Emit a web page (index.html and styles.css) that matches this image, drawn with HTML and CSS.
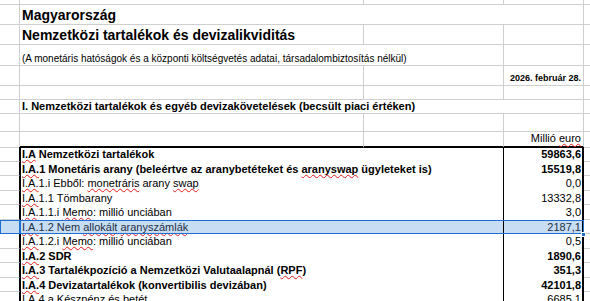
FILE: index.html
```html
<!DOCTYPE html>
<html>
<head>
  <meta charset="utf-8">
  <title>Nemzetközi tartalékok</title>
  <link rel="stylesheet" href="styles.css">
</head>
<body>
  <div class="sheet">
    <!-- fejléc -->
    <div class="row edge">
      <div class="cell"></div><div class="cell"></div><div class="cell"></div><div class="cell"></div><div class="cell e"></div>
    </div>
    <div class="row title">
      <div class="cell"></div>
      <div class="cell span3">Magyarország</div>
      <div class="cell e"></div>
    </div>
    <div class="row title">
      <div class="cell"></div>
      <div class="cell">Nemzetközi tartalékok és devizalikviditás</div>
      <div class="cell"></div><div class="cell"></div><div class="cell e"></div>
    </div>
    <div class="row subtitle">
      <div class="cell"></div>
      <div class="cell span2">(A monetáris hatóságok és a központi költségvetés adatai, társadalombiztosítás nélkül)</div>
      <div class="cell"></div><div class="cell e"></div>
    </div>
    <div class="row date">
      <div class="cell"></div><div class="cell"></div><div class="cell"></div>
      <div class="cell num">2026. február 28.</div>
      <div class="cell e"></div>
    </div>
    <div class="row gap">
      <div class="cell"></div><div class="cell"></div><div class="cell"></div><div class="cell"></div><div class="cell e"></div>
    </div>
    <div class="row section">
      <div class="cell"></div>
      <div class="cell span3">I. Nemzetközi tartalékok és egyéb devizakövetelések (becsült piaci értéken)</div>
      <div class="cell e"></div>
    </div>
    <div class="row spacer">
      <div class="cell"></div><div class="cell"></div><div class="cell"></div><div class="cell"></div><div class="cell e"></div>
    </div>
    <div class="row unit">
      <div class="cell"></div><div class="cell top"></div><div class="cell top"></div>
      <div class="cell num top"><span>Millió <span class="sp">euro</span></span></div>
      <div class="cell e"></div>
    </div>

    <!-- táblázat -->
    <div class="row item bold">
      <div class="cell a"></div>
      <div class="cell lab"><span><span class="sp">I.A</span> Nemzetközi tartalékok</span></div>
      <div class="cell val">59863,6</div>
      <div class="cell e"></div>
    </div>
    <div class="row item bold">
      <div class="cell a"></div>
      <div class="cell lab"><span><span class="sp">I.A.</span>1 Monetáris arany (beleértve az aranybetéteket és <span class="sp">aranyswap</span> ügyleteket is)</span></div>
      <div class="cell val">15519,8</div>
      <div class="cell e"></div>
    </div>
    <div class="row item">
      <div class="cell a"></div>
      <div class="cell lab"><span><span class="sp">I.A.</span>1.i Ebből: <span class="sp">monetráris</span> arany <span class="sp">swap</span></span></div>
      <div class="cell val">0,0</div>
      <div class="cell e"></div>
    </div>
    <div class="row item">
      <div class="cell a"></div>
      <div class="cell lab"><span><span class="sp">I.A.</span>1.1 Tömbarany</span></div>
      <div class="cell val">13332,8</div>
      <div class="cell e"></div>
    </div>
    <div class="row item">
      <div class="cell a"></div>
      <div class="cell lab"><span><span class="sp">I.A.</span>1.1.i <span class="sp">Memo</span>: millió unciában</span></div>
      <div class="cell val">3,0</div>
      <div class="cell e"></div>
    </div>
    <div class="row item sel">
      <div class="cell a"></div>
      <div class="cell lab"><span><span class="sp">I.A.</span>1.2 Nem <span class="sp">allokált</span> <span class="sp">aranyszámlák</span></span></div>
      <div class="cell val">2187,1</div>
      <div class="cell e"></div>
    </div>
    <div class="row item">
      <div class="cell a"></div>
      <div class="cell lab"><span><span class="sp">I.A.</span>1.2.i <span class="sp">Memo</span>: millió unciában</span></div>
      <div class="cell val">0,5</div>
      <div class="cell e"></div>
    </div>
    <div class="row item bold">
      <div class="cell a"></div>
      <div class="cell lab"><span><span class="sp">I.A.</span>2 SDR</span></div>
      <div class="cell val">1890,6</div>
      <div class="cell e"></div>
    </div>
    <div class="row item bold">
      <div class="cell a"></div>
      <div class="cell lab"><span><span class="sp">I.A.</span>3 Tartalékpozíció a Nemzetközi Valutaalapnál (<span class="sp">RPF</span>)</span></div>
      <div class="cell val">351,3</div>
      <div class="cell e"></div>
    </div>
    <div class="row item bold">
      <div class="cell a"></div>
      <div class="cell lab"><span><span class="sp">I.A.</span>4 Devizatartalékok (konvertibilis devizában)</span></div>
      <div class="cell val">42101,8</div>
      <div class="cell e"></div>
    </div>
    <div class="row item">
      <div class="cell a"></div>
      <div class="cell lab"><span><span class="sp">I.A.</span>4.a Készpénz és betét</span></div>
      <div class="cell val">6685,1</div>
      <div class="cell e"></div>
    </div>
  </div>
</body>
</html>
```

FILE: styles.css
```css
body {
  margin: 0;
  background-color: white;
  font-family: "Liberation Sans", Arial, sans-serif;
  color: #000;
  overflow: hidden;
}
.sheet {
  width: 590px;
}
.row {
  display: grid;
  grid-template-columns: 20px 344px 140px 80px 1fr;
  height: 20px;
}
.cell {
  box-sizing: border-box;
  min-width: 0;
  display: flex;
  align-items: flex-end;
  padding: 0 2px;
  white-space: nowrap;
  font-size: 11px;
  border-right: 1px solid #cfcfcf;
  border-bottom: 1px solid #cfcfcf;
}
.cell.e {
  border-right: none;
}
.span2 {
  grid-column: span 2;
}
.span3 {
  grid-column: span 3;
}
.num {
  justify-content: flex-end;
}

/* sormagasságok */
.edge { height: 5px; }
.title { height: 20px; }
.subtitle { height: 21px; }
.date { height: 20px; }
.gap { height: 14px; }
.section { height: 14px; }
.spacer { height: 18px; }
.unit { height: 15px; }

.title .cell {
  font-size: 14px;
  font-weight: bold;
  padding-bottom: 1px;
}
.subtitle .cell {
  font-size: 10px;
  padding-bottom: 1px;
}
.date .num {
  font-size: 9px;
  font-weight: bold;
  padding-bottom: 2px;
}
.section .cell {
  font-weight: bold;
  padding-bottom: 1px;
}
.unit .cell {
  padding-bottom: 2px;
}
.unit .top {
  border-bottom: 2px solid #000;
}

/* adattábla keretezése */
.item {
  grid-template-columns: 20px 484px 80px 1fr;
  height: 14.5px;
}
.item .cell {
  align-items: center;
  line-height: 14.5px;
}
.item .a {
  border-right-color: #000;
}
.item .lab {
  border-left: 1px solid #000;
  border-right: 1px solid #000;
  border-bottom: none;
  padding-left: 1px;
}
.item .val {
  justify-content: flex-end;
  border-right: 2px solid #000;
  border-bottom: none;
  padding-right: 1px;
}
.item.bold .lab,
.item.bold .val {
  font-weight: bold;
}

/* helyesírás-ellenőrző aláhúzás */
.sp {
  text-decoration: underline wavy #e01b1b;
  text-decoration-thickness: 1px;
  text-underline-offset: 1px;
  text-decoration-skip-ink: none;
}

/* kijelölt sor */
.sel {
  position: relative;
}
.sel .a,
.sel .lab,
.sel .val {
  background-color: #c6ddf4;
  color: #1f2f45;
}
.sel .a {
  border-right-color: #1d6fd0;
}
.sel .lab {
  border-left-color: #1d6fd0;
}
.sel::after {
  content: "";
  position: absolute;
  left: 0;
  top: 0;
  width: 584px;
  height: 100%;
  box-sizing: border-box;
  border: 1px solid #1d6fd0;
  pointer-events: none;
}
.sel::before {
  content: "";
  position: absolute;
  left: 581px;
  bottom: -3px;
  width: 5px;
  height: 5px;
  background-color: #1d6fd0;
  border: 1px solid white;
  box-sizing: border-box;
  z-index: 1;
}
```
